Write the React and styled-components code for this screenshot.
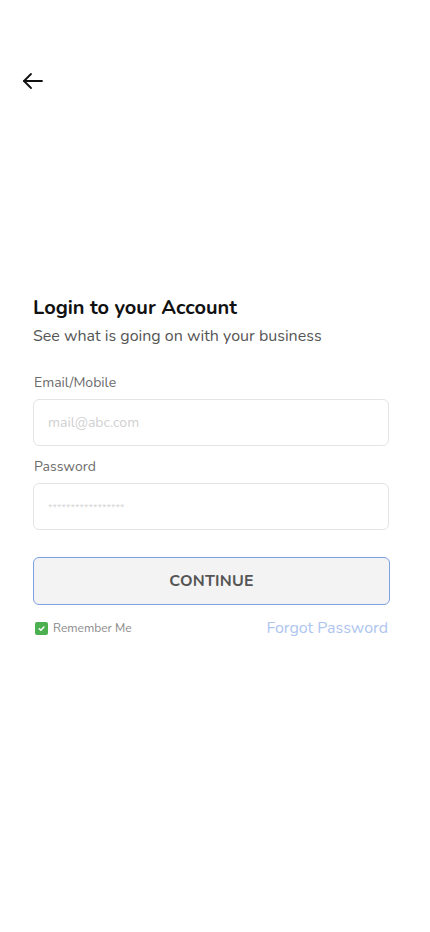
import React from 'react';
import styled, { createGlobalStyle } from 'styled-components';

const GlobalStyle = createGlobalStyle`
  html, body { margin: 0; padding: 0; background: #fff; }
  body { font-family: "Nunito", Lato, "Noto Sans", sans-serif; }
  * { box-sizing: border-box; }
`;

const Screen = styled.div`
  width: 430px;
  min-height: 932px;
  background: #fff;
  display: flex;
  flex-direction: column;
`;

const TopBar = styled.div`
  height: 100px;
  padding: 71px 0 0 22px;
`;

const BackButton = styled.button`
  background: none;
  border: none;
  padding: 0;
  width: 22px;
  height: 20px;
  display: flex;
  align-items: center;
  cursor: pointer;
`;

const Form = styled.div`
  padding: 195px 40px 0 33px;
  display: flex;
  flex-direction: column;
`;

const Title = styled.h1`
  margin: 0;
  font-size: 20px;
  line-height: 26px;
  font-weight: 700;
  color: #111;
`;

const Subtitle = styled.p`
  margin: 4px 0 0;
  font-size: 16px;
  line-height: 22px;
  color: #555;
`;

const Field = styled.div`
  display: flex;
  flex-direction: column;
  margin-top: ${p => p.$top}px;
`;

const Label = styled.label`
  font-size: 14px;
  line-height: 18px;
  color: #6b6b6b;
  margin-bottom: 7px;
  padding-left: 1px;
`;

const Input = styled.input`
  height: 47px;
  width: 356px;
  border: 1px solid #e4e4e4;
  border-radius: 6px;
  padding: 0 14px;
  font-family: inherit;
  font-size: 14px;
  color: #333;
  outline: none;
  &::placeholder {
    color: ${p => (p.$dots ? '#d6d6d6' : '#cfcfcf')};
    font-size: ${p => (p.$dots ? '10px' : '14px')};
  }
`;

const ContinueButton = styled.button`
  margin-top: 27px;
  height: 48px;
  width: 357px;
  background: #f3f3f3;
  border: 1px solid #7f9fe3;
  border-radius: 6px;
  font-family: inherit;
  font-size: 16px;
  font-weight: 700;
  color: #555;
  letter-spacing: 0.2px;
`;

const OptionsRow = styled.div`
  margin-top: 12px;
  width: 357px;
  display: flex;
  align-items: center;
  justify-content: space-between;
`;

const Remember = styled.label`
  display: flex;
  align-items: center;
  gap: 5px;
  font-size: 12px;
  color: #8a8a8a;
  padding-left: 2px;
`;

const Check = styled.span`
  width: 13px;
  height: 13px;
  border-radius: 2px;
  background: #4caf50;
  display: flex;
  align-items: center;
  justify-content: center;
`;

const Forgot = styled.a`
  font-size: 16px;
  color: #aec5f0;
  text-decoration: none;
  padding-right: 2px;
`;

export default function App() {
  return (
    <Screen>
      <GlobalStyle />
      <TopBar>
        <BackButton aria-label="Back">
          <svg width="22" height="18" viewBox="0 0 22 18" fill="none" stroke="#111" strokeWidth="1.8" strokeLinecap="round" strokeLinejoin="round">
            <path d="M20 9H2" />
            <path d="M9 2L2 9l7 7" />
          </svg>
        </BackButton>
      </TopBar>
      <Form>
        <Title>Login to your Account</Title>
        <Subtitle>See what is going on with your business</Subtitle>
        <Field $top={27}>
          <Label>Email/Mobile</Label>
          <Input placeholder="mail@abc.com" />
        </Field>
        <Field $top={12}>
          <Label>Password</Label>
          <Input $dots type="password" placeholder="*****************" />
        </Field>
        <ContinueButton>CONTINUE</ContinueButton>
        <OptionsRow>
          <Remember>
            <Check>
              <svg width="9" height="9" viewBox="0 0 10 10" fill="none" stroke="#fff" strokeWidth="1.6" strokeLinecap="round" strokeLinejoin="round">
                <path d="M2.5 5.2l1.8 1.8 3.4-3.6" />
              </svg>
            </Check>
            Remember Me
          </Remember>
          <Forgot href="#">Forgot Password</Forgot>
        </OptionsRow>
      </Form>
    </Screen>
  );
}
